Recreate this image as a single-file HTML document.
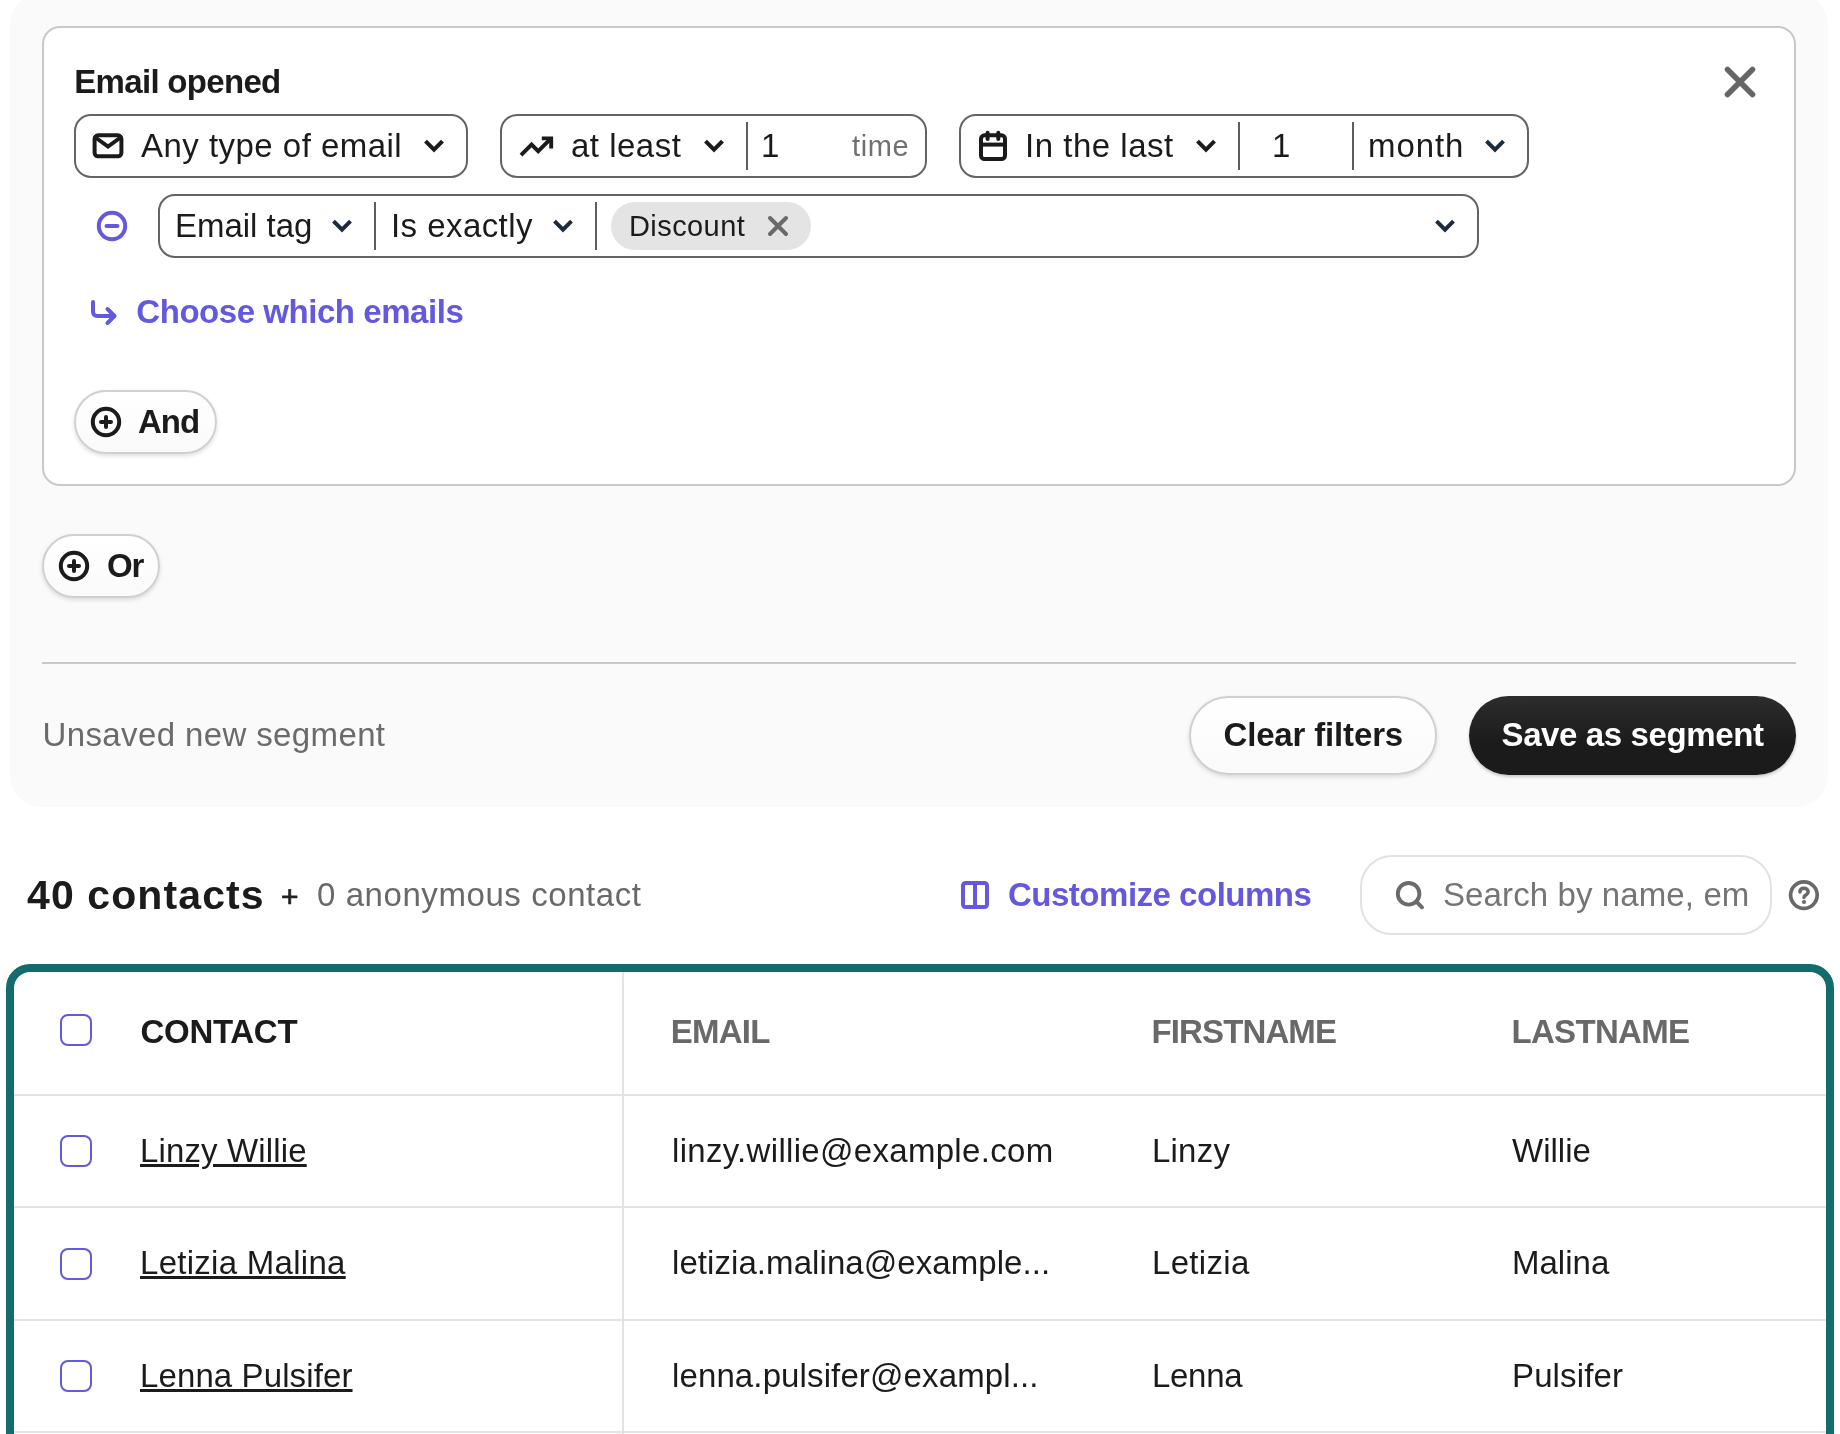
<!DOCTYPE html>
<html lang="en">
<head>
<meta charset="utf-8">
<title>Contacts</title>
<style>
*{box-sizing:border-box;margin:0;padding:0}
html,body{width:1840px;height:1434px;overflow:hidden;background:#fff}
body{position:relative;will-change:transform;font-family:"Liberation Sans",Arial,sans-serif;color:#1b1b1b;font-size:32px}
.abs,.t{position:absolute}
.t{white-space:nowrap;line-height:32px;height:32px}
.b{font-weight:700}
.panel{left:10px;top:-7px;width:1818px;height:814px;background:#fafafa;border-radius:32px}
.card{left:42px;top:26px;width:1754px;height:460px;background:#fff;border:2px solid #c8c8c8;border-radius:18px}
.sel{border:2px solid #646464;border-radius:17px;background:#fff;height:64px}
.vd{width:2px;background:#5e5e5e;height:48px}
.chip{left:611px;top:202px;width:200px;height:48px;border-radius:24px;background:#e4e4e4}
.pill{border:2px solid #d0d0d0;border-radius:40px;background:linear-gradient(#fff,#fafafa);box-shadow:0 2px 4px rgba(0,0,0,.13)}
.purple{color:#6358de}
.gray{color:#696969}
.hr{left:42px;top:662px;width:1754px;height:2px;background:#c8c8c8}
.save{left:1469px;top:696px;width:327px;height:79px;border-radius:40px;background:linear-gradient(#2d2d2d,#1b1b1b 60%);box-shadow:0 2px 3px rgba(0,0,0,.2)}
.search{left:1360px;top:855px;width:412px;height:80px;border-radius:32px;border:2px solid #e2e2e2;background:#fff}
.table{left:6px;top:964px;width:1828px;height:520px;border:8px solid #136b6b;border-radius:24px;background:#fff}
.hl{height:2px;background:#e3e3e3;left:14px;width:1812px}
.vl{width:2px;background:#e3e3e3;left:622px;top:972px;height:470px}
.cb{left:60px;width:32px;height:32px;border:2px solid #6358de;border-radius:8px;background:#fff}
.u{text-decoration:underline;text-decoration-thickness:3px;text-underline-offset:2px}
svg{position:absolute;overflow:visible}
</style>
</head>
<body>
<div class="abs panel"></div>
<div class="abs card"></div>

<!-- SECTION:FILTER -->
<div class="t b" style="left:74.3px;top:66px;font-size:33px;letter-spacing:-0.69px">Email opened</div>
<svg style="left:1725px;top:67px" width="30" height="30" viewBox="0 0 30 30"><path d="M2.5 2.5L27.5 27.5M27.5 2.5L2.5 27.5" stroke="#666" stroke-width="5.6" stroke-linecap="round" fill="none"/></svg>

<!-- select 1 -->
<div class="abs sel" style="left:74px;top:114px;width:394px"></div>
<svg style="left:92px;top:133px" width="32" height="26" viewBox="0 0 32 26"><rect x="2.6" y="2.3" width="26.8" height="21" rx="3.5" fill="none" stroke="#1b1b1b" stroke-width="4"/><path d="M3.5 4.5L16 13.6L28.5 4.5" fill="none" stroke="#1b1b1b" stroke-width="4" stroke-linejoin="miter"/></svg>
<div class="t" style="left:141px;top:130px;font-size:33px;letter-spacing:0.47px">Any type of email</div>
<svg style="left:424px;top:138px" width="20" height="16" viewBox="0 0 20 16"><path d="M1.5 3.2L10 11.7L18.5 3.2" fill="none" stroke="#1b1b1b" stroke-width="4"/></svg>

<!-- select 2 -->
<div class="abs sel" style="left:500px;top:114px;width:427px"></div>
<svg style="left:516px;top:126.6px" width="40" height="40" viewBox="0 0 40 40"><path d="M5 28.2L15.6 17.6L22.2 24.2L34.6 11.8" fill="none" stroke="#1b1b1b" stroke-width="3.9"/><path d="M25.8 11.4H35.2V21.4" fill="none" stroke="#1b1b1b" stroke-width="3.9"/></svg>
<div class="t" style="left:571px;top:130px;font-size:33px;letter-spacing:0.49px">at least</div>
<svg style="left:704px;top:138px" width="20" height="16" viewBox="0 0 20 16"><path d="M1.5 3.2L10 11.7L18.5 3.2" fill="none" stroke="#1b1b1b" stroke-width="4"/></svg>
<div class="abs vd" style="left:746px;top:122px"></div>
<div class="t" style="left:761px;top:130px;font-size:33px">1</div>
<div class="t gray" style="left:852px;top:130px;font-size:29px;letter-spacing:.6px;color:#707070">time</div>

<!-- select 3 -->
<div class="abs sel" style="left:959px;top:114px;width:570px"></div>
<svg style="left:979px;top:131px" width="28" height="30" viewBox="0 0 28 30"><rect x="2" y="4.3" width="24" height="23.7" rx="3.5" fill="none" stroke="#1b1b1b" stroke-width="4"/><path d="M2 13.6H26" stroke="#1b1b1b" stroke-width="4" fill="none"/><path d="M8.6 1.8V8M19.3 1.8V8" stroke="#1b1b1b" stroke-width="4" stroke-linecap="round" fill="none"/></svg>
<div class="t" style="left:1025px;top:130px;font-size:33px;letter-spacing:0.52px">In the last</div>
<svg style="left:1196px;top:138px" width="20" height="16" viewBox="0 0 20 16"><path d="M1.5 3.2L10 11.7L18.5 3.2" fill="none" stroke="#1b1b1b" stroke-width="4"/></svg>
<div class="abs vd" style="left:1238px;top:122px"></div>
<div class="t" style="left:1272px;top:130px;font-size:33px">1</div>
<div class="abs vd" style="left:1352px;top:122px"></div>
<div class="t" style="left:1368px;top:130px;font-size:33px;letter-spacing:0.9px">month</div>
<svg style="left:1485px;top:138px" width="20" height="16" viewBox="0 0 20 16"><path d="M1.5 3.2L10 11.7L18.5 3.2" fill="none" stroke="#1c2b3d" stroke-width="4"/></svg>

<!-- row 2 -->
<svg style="left:96px;top:210px" width="32" height="32" viewBox="0 0 32 32"><circle cx="16" cy="16" r="13.2" fill="none" stroke="#6358de" stroke-width="4"/><path d="M10.5 16H21.5" stroke="#6358de" stroke-width="4" stroke-linecap="round"/></svg>
<div class="abs sel" style="left:158px;top:194px;width:1321px"></div>
<div class="t" style="left:175px;top:210px;font-size:33px;letter-spacing:-0.02px">Email tag</div>
<svg style="left:332px;top:218px" width="20" height="16" viewBox="0 0 20 16"><path d="M1.5 3.2L10 11.7L18.5 3.2" fill="none" stroke="#1c2b3d" stroke-width="4"/></svg>
<div class="abs vd" style="left:374px;top:202px"></div>
<div class="t" style="left:391px;top:210px;font-size:33px;letter-spacing:0.44px">Is exactly</div>
<svg style="left:553px;top:218px" width="20" height="16" viewBox="0 0 20 16"><path d="M1.5 3.2L10 11.7L18.5 3.2" fill="none" stroke="#1c2b3d" stroke-width="4"/></svg>
<div class="abs vd" style="left:595px;top:202px"></div>
<div class="abs chip"></div>
<div class="t" style="left:629px;top:210px;font-size:29px;letter-spacing:.42px">Discount</div>
<svg style="left:767px;top:215px" width="22" height="22" viewBox="0 0 22 22"><path d="M3 3L19 19M19 3L3 19" stroke="#696969" stroke-width="4" stroke-linecap="round" fill="none"/></svg>
<svg style="left:1435px;top:218px" width="20" height="16" viewBox="0 0 20 16"><path d="M1.5 3.2L10 11.7L18.5 3.2" fill="none" stroke="#1c2b3d" stroke-width="4"/></svg>

<!-- choose which -->
<svg style="left:90px;top:299px" width="28" height="28" viewBox="0 0 28 28"><path d="M3 3V12.5Q3 17 7.5 17H24M17.5 10L24.5 17L17.5 24" fill="none" stroke="#6358de" stroke-width="4" stroke-linecap="round" stroke-linejoin="round"/></svg>
<div class="t b purple" style="left:136.3px;top:296px;font-size:33px;letter-spacing:-0.45px">Choose which emails</div>

<!-- And -->
<div class="abs pill" style="left:74px;top:390px;width:143px;height:64px"></div>
<svg style="left:90px;top:406px" width="32" height="32" viewBox="0 0 32 32"><circle cx="16" cy="16" r="13.2" fill="none" stroke="#1b1b1b" stroke-width="4"/><path d="M11 16H21M16 11V21" stroke="#1b1b1b" stroke-width="4" stroke-linecap="round"/></svg>
<div class="t b" style="left:138px;top:406px;font-size:33px;letter-spacing:-0.98px">And</div>

<!-- Or -->
<div class="abs pill" style="left:42px;top:534px;width:118px;height:64px"></div>
<svg style="left:58px;top:550px" width="32" height="32" viewBox="0 0 32 32"><circle cx="16" cy="16" r="13.2" fill="none" stroke="#1b1b1b" stroke-width="4"/><path d="M11 16H21M16 11V21" stroke="#1b1b1b" stroke-width="4" stroke-linecap="round"/></svg>
<div class="t b" style="left:107px;top:550px;font-size:33px;letter-spacing:-1.17px">Or</div>
<!-- /SECTION:FILTER -->

<!-- SECTION:FOOTER -->
<div class="abs hr"></div>
<div class="t gray" style="left:42.5px;top:719px;color:#6b6b6b;font-size:33px;letter-spacing:0.38px">Unsaved new segment</div>
<div class="abs pill" style="left:1189px;top:696px;width:248px;height:79px"></div>
<div class="t b" style="left:1223.5px;top:719px;font-size:33px;letter-spacing:-0.16px">Clear filters</div>
<div class="abs save"></div>
<div class="t b" style="left:1501.5px;top:719px;color:#fff;font-size:33px;letter-spacing:-0.38px">Save as segment</div>
<!-- /SECTION:FOOTER -->

<!-- SECTION:LISTHEAD -->
<div class="t b" style="left:27px;top:875px;font-size:41px;line-height:40px;height:40px;letter-spacing:1.1px">40 contacts</div>
<div class="t" style="left:281px;top:881px;font-size:30px;color:#222;-webkit-text-stroke:.7px #222">+</div>
<div class="t gray" style="left:317px;top:879px;font-size:33px;letter-spacing:0.57px">0 anonymous contact</div>
<svg style="left:959px;top:879.3px" width="32" height="32" viewBox="0 0 32 32"><rect x="4" y="4" width="24" height="24" rx="2.5" fill="none" stroke="#6358de" stroke-width="4"/><path d="M16 4V28" stroke="#6358de" stroke-width="4"/></svg>
<div class="t b purple" style="left:1008px;top:879px;font-size:33px;letter-spacing:-0.49px">Customize columns</div>
<div class="abs search"></div>
<svg style="left:1394px;top:879px" width="32" height="32" viewBox="0 0 32 32"><circle cx="14.6" cy="14.8" r="10.8" fill="none" stroke="#6b6b6b" stroke-width="3.9"/><path d="M22.4 22.6L28 28.3" stroke="#6b6b6b" stroke-width="3.9" stroke-linecap="round"/></svg>
<div class="t" style="left:1443px;top:879px;color:#757575;font-size:33px;letter-spacing:0.11px">Search by name, em</div>
<svg style="left:1788px;top:879px" width="32" height="32" viewBox="0 0 32 32"><circle cx="15.9" cy="16.1" r="13.3" fill="none" stroke="#696969" stroke-width="3.7"/><path d="M11.9 13.1C11.9 10.4 13.8 9.2 16 9.2C18.4 9.2 20.2 10.7 20.2 12.9C20.2 15.9 16 16 16 18.4" fill="none" stroke="#696969" stroke-width="3.5" stroke-linecap="round"/><circle cx="16" cy="23" r="2.1" fill="#696969"/></svg>
<!-- /SECTION:LISTHEAD -->

<!-- SECTION:TABLE -->
<div class="abs table"></div>
<div class="abs vl"></div>
<div class="abs hl" style="top:1094px"></div>
<div class="abs hl" style="top:1206px"></div>
<div class="abs hl" style="top:1318.5px"></div>
<div class="abs hl" style="top:1431px"></div>
<div class="abs cb" style="top:1014px"></div>
<div class="abs cb" style="top:1135px"></div>
<div class="abs cb" style="top:1247.5px"></div>
<div class="abs cb" style="top:1360px"></div>
<div class="t b" style="left:140.5px;top:1016px;font-size:33px;letter-spacing:-0.3px">CONTACT</div>
<div class="t b gray" style="left:670.8px;top:1016px;font-size:33px;letter-spacing:-0.78px">EMAIL</div>
<div class="t b gray" style="left:1151.5px;top:1016px;font-size:33px;letter-spacing:-0.88px">FIRSTNAME</div>
<div class="t b gray" style="left:1511.5px;top:1016px;font-size:33px;letter-spacing:-0.69px">LASTNAME</div>

<div class="t u" style="left:140px;top:1135px;font-size:33px;letter-spacing:0.14px">Linzy Willie</div>
<div class="t" style="left:672px;top:1135px;font-size:33px;letter-spacing:0.31px">linzy.willie@example.com</div>
<div class="t" style="left:1152px;top:1135px;font-size:33px;letter-spacing:0.21px">Linzy</div>
<div class="t" style="left:1512px;top:1135px;font-size:33px;letter-spacing:0.02px">Willie</div>

<div class="t u" style="left:140px;top:1247px;font-size:33px;letter-spacing:0.28px">Letizia Malina</div>
<div class="t" style="left:672px;top:1247px;font-size:33px;letter-spacing:0.07px">letizia.malina@example...</div>
<div class="t" style="left:1152px;top:1247px;font-size:33px;letter-spacing:0.32px">Letizia</div>
<div class="t" style="left:1512px;top:1247px;font-size:33px;letter-spacing:0.01px">Malina</div>

<div class="t u" style="left:140px;top:1359.5px;font-size:33px;letter-spacing:0.11px">Lenna Pulsifer</div>
<div class="t" style="left:672px;top:1359.5px;font-size:33px;letter-spacing:0.12px">lenna.pulsifer@exampl...</div>
<div class="t" style="left:1152px;top:1359.5px;font-size:33px;letter-spacing:-0.3px">Lenna</div>
<div class="t" style="left:1512px;top:1359.5px;font-size:33px;letter-spacing:0.12px">Pulsifer</div>
<!-- /SECTION:TABLE -->

</body>
</html>
